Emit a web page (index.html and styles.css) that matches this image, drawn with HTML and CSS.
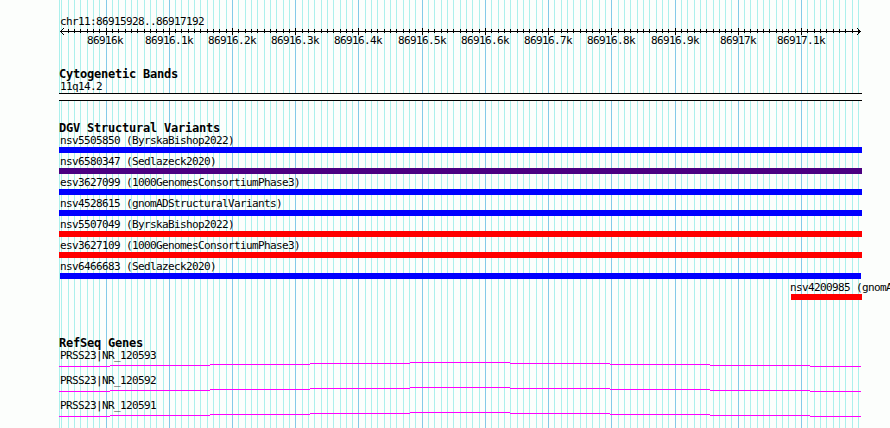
FILE: index.html
```html
<!DOCTYPE html>
<html>
<head lang="en">
    <meta charset="UTF-8">
    <title>chr11:86915928..86917192</title>
    <link rel="stylesheet" href="styles.css">
</head>
<body>
<div class="browser">
    <svg id="grid" class="grid" width="890" height="428" shape-rendering="crispEdges"></svg>

    <div class="tracks">
        <div class="region">chr11:86915928..86917192</div>
        <svg id="ruler" class="ruler" width="831" height="20" shape-rendering="crispEdges"></svg>

        <div class="track cyto">
            <div class="track-title">Cytogenetic Bands</div>
            <div class="label">11q14.2</div>
            <div class="band"></div>
        </div>

        <div class="track variants">
            <div class="track-title">DGV Structural Variants</div>
            <div class="variant"><div class="label">nsv5505850 (ByrskaBishop2022)</div><div class="bar gain"></div></div>
            <div class="variant"><div class="label">nsv6580347 (Sedlazeck2020)</div><div class="bar complex"></div></div>
            <div class="variant"><div class="label">esv3627099 (1000GenomesConsortiumPhase3)</div><div class="bar gain"></div></div>
            <div class="variant"><div class="label">nsv4528615 (gnomADStructuralVariants)</div><div class="bar gain"></div></div>
            <div class="variant"><div class="label">nsv5507049 (ByrskaBishop2022)</div><div class="bar loss"></div></div>
            <div class="variant"><div class="label">esv3627109 (1000GenomesConsortiumPhase3)</div><div class="bar loss"></div></div>
            <div class="variant"><div class="label">nsv6466683 (Sedlazeck2020)</div><div class="bar gain inner"></div></div>
            <div class="variant last"><div class="label">nsv4200985 (gnomADStructuralVariants)</div><div class="bar loss"></div></div>
        </div>

        <div class="track genes">
            <div class="track-title">RefSeq Genes</div>
            <div class="gene"><div class="label">PRSS23|NR_120593</div></div>
            <div class="gene"><div class="label">PRSS23|NR_120592</div></div>
            <div class="gene"><div class="label">PRSS23|NR_120591</div></div>
        </div>
    </div>
</div>

<script src="script.js"></script>
</body>
</html>
```
FILE: styles.css
```css
body {
    margin: 0px;
    background: #fcfefc;
    color: #000000;
    font-family: "DejaVu Sans Mono", monospace;
    overflow: hidden;
}
.browser {
    position: relative;
    width: 890px;
    height: 428px;
    overflow: hidden;
}
.grid {
    position: absolute;
    left: 0px;
    top: 0px;
}
.grid-minor {
    fill: #acf0ec;
}
.grid-major {
    fill: #84cae8;
}
.tracks {
    position: relative;
    width: 831px;
    padding: 16px 0px 0px 59px;
}
.region, .label {
    height: 12px;
    padding-left: 1px;
    font-size: 11px;
    line-height: 12px;
    letter-spacing: -0.622px;
    white-space: pre;
}
.region {
    height: 11px;
}
.ruler {
    display: block;
    font-size: 11px;
    letter-spacing: -0.622px;
}
.track-title {
    height: 13px;
    font-size: 12px;
    line-height: 13px;
    font-weight: bold;
    letter-spacing: -0.224px;
    white-space: pre;
}
.cyto {
    margin-top: 21px;
}
.band {
    width: 803px;
    height: 6px;
    border-top: #000000 solid 1px;
    border-bottom: #000000 solid 1px;
    background: #fcfefc;
}
.variants {
    margin-top: 21px;
}
.variant {
    height: 21px;
}
.bar {
    width: 803px;
    height: 6px;
}
.gain {
    background: #0000ff;
}
.loss {
    background: #ff0000;
}
.complex {
    background: #4b0082;
}
.inner {
    width: 801px;
    margin-left: 1px;
}
.last {
    width: 71px;
    margin-left: 732px;
}
.last .label {
    padding-left: 0px;
    margin-left: -1px;
}
.last .bar {
    width: 71px;
}
.genes {
    margin-top: 34px;
}
.gene {
    height: 25px;
}
.intron {
    display: block;
    fill: #ff00ff;
}
```
FILE: script.js
```javascript
var NS = 'http://www.w3.org/2000/svg';
var grid = document.getElementById('grid');
var ruler = document.getElementById('ruler');

function rect(parent, x, y, w, h, cls) {
  var r = document.createElementNS(NS, 'rect');
  r.setAttribute('x', x);
  r.setAttribute('y', y);
  r.setAttribute('width', w);
  r.setAttribute('height', h);
  if (cls) {
    r.setAttribute('class', cls);
  }
  parent.appendChild(r);
}

// axis line and arrow heads
rect(ruler, 1, 4, 801, 1);
for (var a = 1; a <= 3; a++) {
  rect(ruler, 1 + a, 4 - a, 1, 1);
  rect(ruler, 1 + a, 4 + a, 1, 1);
  rect(ruler, 801 - a, 4 - a, 1, 1);
  rect(ruler, 801 - a, 4 + a, 1, 1);
}

// one line every 10 bp, a major one every 100 bp
rect(grid, 59, 0, 1, 428, 'grid-minor');
for (var i = -7; i < 120; i++) {
  var x = Math.floor(106.11 + i * 6.322);
  if (x > 861) {
    break;
  }
  var major = i % 10 === 0;
  rect(grid, x, 0, 1, 428, major ? 'grid-major' : 'grid-minor');
  // no tick under the arrow heads
  if (x > 64) {
    rect(ruler, x - 59, major ? 1 : 2, 1, major ? 7 : 4);
  }
  if (major) {
    var name = (869160 + i / 10) / 10 + 'k';
    var t = document.createElementNS(NS, 'text');
    t.setAttribute('x', x - 59 - name.length * 3 - (i === 0 ? 1 : 0));
    t.setAttribute('y', 17);
    t.textContent = name;
    ruler.appendChild(t);
  }
}

// intron lines rise by a pixel towards the middle of the gene
var steps = [[0, 51, 4], [51, 100, 3], [151, 100, 2], [251, 100, 1], [351, 100, 0],
  [451, 100, 1], [551, 100, 2], [651, 100, 3], [751, 51, 4]];
var genes = document.querySelectorAll('.gene');
for (var g = 0; g < genes.length; g++) {
  var svg = document.createElementNS(NS, 'svg');
  svg.setAttribute('class', 'intron');
  svg.setAttribute('width', 803);
  svg.setAttribute('height', 5);
  svg.setAttribute('shape-rendering', 'crispEdges');
  for (var s = 0; s < steps.length; s++) {
    rect(svg, steps[s][0], steps[s][2], steps[s][1], 1);
  }
  genes[g].appendChild(svg);
}
```
